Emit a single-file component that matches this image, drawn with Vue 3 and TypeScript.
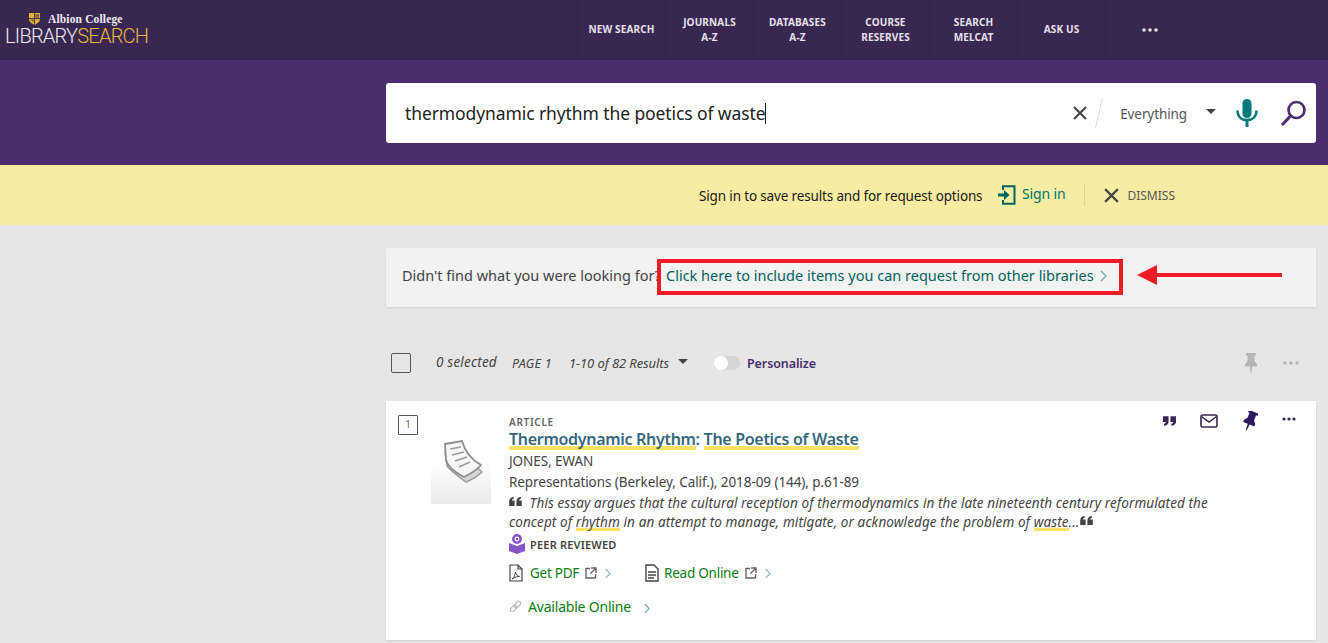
<script setup lang="ts">
interface NavItem {
  lines: string[]
}

const navItems: NavItem[] = [
  { lines: ['NEW SEARCH'] },
  { lines: ['JOURNALS', 'A-Z'] },
  { lines: ['DATABASES', 'A-Z'] },
  { lines: ['COURSE', 'RESERVES'] },
  { lines: ['SEARCH', 'MELCAT'] },
  { lines: ['ASK US'] },
]
</script>

<template>
  <div class="page">
    <header class="topbar">
      <div class="logo">
        <div class="logo__college">
          <svg class="logo__shield" viewBox="0 0 12 13" width="11" height="12">
            <path d="M0 0h12v6.500c0 3-3 5-6 6.500-3-1.500-6-3.500-6-6.500z" fill="#e2b43c" />
            <path d="M6 0v13M0 6h12" stroke="#3a2751" stroke-width="1" />
            <path d="M1 7h4v3zM7 1h4v4H7z" fill="#7d6430" />
          </svg>
          <span>Albion College</span>
        </div>
        <div class="logo__name">LIBRARY<span>SEARCH</span></div>
      </div>
      <nav class="topnav">
        <a v-for="item in navItems" :key="item.lines[0]" class="topnav__item">
          <span v-for="line in item.lines" :key="line">{{ line }}</span>
        </a>
        <a class="topnav__item topnav__more">
          <svg viewBox="0 0 16 4" width="16" height="4"><circle cx="2" cy="2" r="1.800" /><circle cx="8" cy="2" r="1.800" /><circle cx="14" cy="2" r="1.800" /></svg>
        </a>
      </nav>
    </header>

    <section class="searchband">
      <div class="searchbox">
        <span class="searchbox__query">thermodynamic rhythm the poetics of waste</span>
        <span class="searchbox__caret"></span>
        <svg class="searchbox__clear" viewBox="0 0 16 16" width="16" height="16">
          <path d="M2 2l12 12M14 2L2 14" stroke="#444" stroke-width="2" fill="none" />
        </svg>
        <svg class="searchbox__slash" viewBox="0 0 10 32" width="10" height="32">
          <path d="M8.500 1L1.500 31" stroke="#ddd" stroke-width="1" />
        </svg>
        <span class="searchbox__scope">Everything</span>
        <span class="caret-down searchbox__arrow"></span>
        <svg class="searchbox__mic" viewBox="0 0 22 28" width="22" height="28">
          <rect x="6.500" y="0" width="9" height="19" rx="4.500" fill="#047a7c" />
          <path d="M1.500 11.500c0 6 4 9.500 9.500 9.500s9.500-3.500 9.500-9.500" fill="none" stroke="#047a7c" stroke-width="2.600" />
          <path d="M11 21v7" stroke="#047a7c" stroke-width="3" />
        </svg>
        <svg class="searchbox__go" viewBox="0 0 26 26" width="26" height="26">
          <circle cx="15.500" cy="10" r="8" fill="none" stroke="#4b2e6e" stroke-width="2.600" />
          <path d="M9.500 16L2 24" stroke="#4b2e6e" stroke-width="3.200" stroke-linecap="round" />
        </svg>
      </div>
    </section>

    <section class="signin">
      <span class="signin__text">Sign in to save results and for request options</span>
      <a class="signin__link">
        <svg viewBox="0 0 18 20" width="18" height="20">
          <path d="M5 5V1.200h11.500v17.600H5V15" fill="none" stroke="#00645f" stroke-width="2" />
          <path d="M0 8.500h6V5l5.500 5L6 15v-3.500H0z" fill="#00645f" />
        </svg>
        <span class="signin__label">Sign in</span>
      </a>
      <span class="signin__divider"></span>
      <a class="signin__dismiss">
        <svg viewBox="0 0 16 16" width="17" height="17">
          <path d="M2 2l12 12M14 2L2 14" stroke="#444" stroke-width="2" fill="none" />
        </svg>
        <span>DISMISS</span>
      </a>
    </section>

    <main class="results">
      <div class="expand">
        <span class="expand__lead">Didn't find what you were looking for?</span>
        <a class="expand__link">Click here to include items you can request from other libraries</a>
        <svg class="expand__chevron" viewBox="0 0 7 12" width="7" height="12">
          <path d="M1 1l5 5-5 5" fill="none" stroke="#7fb0b2" stroke-width="1.500" />
        </svg>
        <span class="expand__mark"></span>
        <svg class="expand__arrow" viewBox="0 0 145 20" width="145" height="20">
          <path d="M0 10L20 0v8h125v4H20v8z" fill="#ed1c24" />
        </svg>
      </div>

      <div class="toolbar">
        <span class="checkbox"></span>
        <span class="toolbar__selected">0 selected</span>
        <span class="toolbar__page">PAGE 1</span>
        <span class="toolbar__count">1-10 of 82 Results</span>
        <span class="caret-down toolbar__arrow"></span>
        <span class="toggle"><span class="toggle__knob"></span></span>
        <span class="toolbar__personalize">Personalize</span>
        <svg class="toolbar__pin" viewBox="0 0 12 20" width="12" height="20">
          <path d="M1 0h10v2.500H9.500v5.500l2.500 3v2.500H7L6.500 20h-1L5 13.500H0V11l2.500-3V2.500H1z" fill="#b5b5b5" />
        </svg>
        <svg class="toolbar__more" viewBox="0 0 16 4" width="16" height="4">
          <circle cx="2" cy="2" r="1.800" /><circle cx="8" cy="2" r="1.800" /><circle cx="14" cy="2" r="1.800" />
        </svg>
      </div>

      <article class="record">
        <span class="record__index">1</span>
        <div class="record__thumb">
          <svg viewBox="0 0 44 46" width="44" height="46">
            <path d="M6 12l2 14c4 5 12 11 19 16 5-2 11-5 16-10l-3-3z" fill="#d5d5d5" stroke="#9c9c9c" stroke-width="1.500" />
            <path d="M6 4l17-3c3 11 10 19 19 24-4 5-11 9-17 12C15 32 9 27 7 20z" fill="#f7f7f7" stroke="#8e8e8e" stroke-width="1.800" />
            <path d="M11 9l11-2M13 15l12-3M16 21l12-4M20 27l11-5" stroke="#9a9a9a" stroke-width="1.600" />
          </svg>
        </div>
        <div class="record__body">
          <div class="record__type">ARTICLE</div>
          <h3 class="record__title"><mark>Thermodynamic Rhythm</mark>: <mark>The Poetics of Waste</mark></h3>
          <div class="record__author">JONES, EWAN</div>
          <div class="record__source">Representations (Berkeley, Calif.), 2018-09 (144), p.61-89</div>
          <p class="record__snippet">
            <svg class="quote" viewBox="0 0 14 10" width="13" height="9"><path d="M0 10V5c0-3 2-5 5-5v2C4 2 3 3 3 4h3v6zM8 10V5c0-3 2-5 5-5v2c-1 0-2 1-2 2h3v6z" fill="#444" /></svg>
            This essay argues that the cultural reception of thermodynamics in the late nineteenth century reformulated the concept of <u>rhythm</u> in an attempt to manage, mitigate, or acknowledge the problem of <u>waste</u>...<svg class="quote quote--end" viewBox="0 0 14 10" width="13" height="9"><path d="M0 10V5c0-3 2-5 5-5v2C4 2 3 3 3 4h3v6zM8 10V5c0-3 2-5 5-5v2c-1 0-2 1-2 2h3v6z" fill="#444" /></svg>
          </p>
          <div class="record__peer">
            <svg viewBox="0 0 16 20" width="16" height="20">
              <circle cx="8" cy="5" r="5" fill="#8656c9" />
              <circle cx="8" cy="5" r="2.400" fill="#fff" />
              <circle cx="8" cy="5" r="1.200" fill="#8656c9" />
              <path d="M0 9l8 3 8-3v8l-8 3-8-3z" fill="#8656c9" />
            </svg>
            <span>PEER REVIEWED</span>
          </div>
          <div class="record__links">
            <a class="access">
              <svg viewBox="0 0 14 18" width="14" height="18">
                <path d="M1 1h8l4 4v12H1z" fill="none" stroke="#444" stroke-width="1.200" />
                <path d="M9 1v4h4" fill="none" stroke="#444" stroke-width="1.200" />
                <path d="M3 15c2-1 3-4 3.500-7 .5 3 2 4 4 4.500-2 0-4 .5-7.500 2.500z" fill="none" stroke="#444" stroke-width="1" />
              </svg>
              <span class="access__label">Get PDF</span>
              <svg class="external" viewBox="0 0 12 12" width="12" height="12">
                <path d="M5 1.500H1v9.500h9.500V7M6 1h5v5M11 1L5.500 6.500" fill="none" stroke="#666" stroke-width="1.400" />
              </svg>
              <svg class="chevron" viewBox="0 0 7 12" width="6" height="11"><path d="M1 1l5 5-5 5" fill="none" stroke="#9cb8c4" stroke-width="1.500" /></svg>
            </a>
            <a class="access">
              <svg viewBox="0 0 14 18" width="14" height="18">
                <path d="M1 1h8l4 4v12H1z" fill="none" stroke="#444" stroke-width="1.400" />
                <path d="M3 8h8M3 11h8M3 14h6" stroke="#444" stroke-width="1.300" />
              </svg>
              <span class="access__label access__label--tight">Read Online</span>
              <svg class="external" viewBox="0 0 12 12" width="12" height="12">
                <path d="M5 1.500H1v9.500h9.500V7M6 1h5v5M11 1L5.500 6.500" fill="none" stroke="#666" stroke-width="1.400" />
              </svg>
              <svg class="chevron" viewBox="0 0 7 12" width="6" height="11"><path d="M1 1l5 5-5 5" fill="none" stroke="#9cb8c4" stroke-width="1.500" /></svg>
            </a>
          </div>
          <a class="record__available">
            <svg viewBox="0 0 13 13" width="13" height="13">
              <g transform="rotate(-45 6.500 6.500)" fill="none" stroke="#bbb" stroke-width="1.200">
                <rect x="0" y="4.500" width="7.500" height="4" rx="2" />
                <rect x="5.500" y="4.500" width="7.500" height="4" rx="2" />
              </g>
            </svg>
            <span>Available Online</span>
            <svg class="chevron chevron--low" viewBox="0 0 7 12" width="6" height="11"><path d="M1 1l5 5-5 5" fill="none" stroke="#7fb0b2" stroke-width="1.500" /></svg>
          </a>
        </div>
        <div class="record__actions">
          <svg viewBox="0 0 14 10" width="13" height="10"><path d="M0 0h6v6c0 2-2 4-5 4V8c1 0 2-1 2-2H0zM8 0h6v6c0 2-2 4-5 4V8c1 0 2-1 2-2H8z" fill="#3a2751" /></svg>
          <svg viewBox="0 0 18 14" width="18" height="14">
            <rect x="1" y="1" width="16" height="12" rx="1.500" fill="none" stroke="#3a2751" stroke-width="1.600" />
            <path d="M1.500 2.500L9 8l7.500-5.500" fill="none" stroke="#3a2751" stroke-width="1.500" />
          </svg>
          <svg viewBox="-2 0 16 20" width="16" height="20">
            <path transform="rotate(22 6 10)" d="M1 0h10v2.500H9.500v5.500l2.500 3v2.500H7L6.500 20h-1L5 13.500H0V11l2.500-3V2.500H1z" fill="#2d1a5e" />
          </svg>
          <svg class="record__dots" viewBox="0 0 14 4" width="14" height="4"><circle cx="2" cy="2" r="1.600" fill="#3a2751" /><circle cx="7" cy="2" r="1.600" fill="#3a2751" /><circle cx="12" cy="2" r="1.600" fill="#3a2751" /></svg>
        </div>
      </article>
    </main>
  </div>
</template>

<style>
html,
body {
  margin: 0;
  background: #e6e6e6;
  overflow: hidden;
}
</style>

<style scoped>
.page {
  width: 1328px;
  height: 643px;
  overflow: hidden;
  font-family: "Noto Sans", "Open Sans", sans-serif;
  color: #3a3a3a;
}

.topbar {
  height: 60px;
  background: #3a2751;
  display: flex;
  justify-content: space-between;
}

.logo {
  padding: 12px 0 0 5px;
  color: #eeeaf2;
}

.logo__college {
  display: flex;
  align-items: center;
  gap: 8px;
  padding-left: 24px;
  font: bold 11.500px/14px "Liberation Serif", serif;
  letter-spacing: 0.15px;
}

.logo__name {
  font: 300 20px/20px Roboto, sans-serif;
  letter-spacing: -0.75px;
  margin-top: 0;
}

.logo__name span {
  color: #e9b93a;
}

.topnav {
  display: flex;
  margin-right: 135px;
}

.topnav__item {
  width: 88px;
  box-sizing: border-box;
  padding-bottom: 1px;
  border-left: 1px solid #352247;
  display: flex;
  flex-direction: column;
  align-items: center;
  justify-content: center;
  color: #e6e1ec;
  font-size: 10px;
  font-weight: 700;
  line-height: 14.500px;
  letter-spacing: 0.15px;
}

.topnav__more svg {
  fill: #e6e1ec;
}

.searchband {
  height: 105px;
  background: #4b2e6e;
  box-sizing: border-box;
  padding: 23px 12px 0 386px;
}

.searchbox {
  height: 60px;
  background: #fff;
  border-radius: 3px;
  display: flex;
  align-items: center;
  padding: 0 9px 0 19px;
}

.searchbox__query {
  font-size: 17.500px;
  letter-spacing: -0.1px;
  color: #222;
}

.searchbox__caret {
  width: 1px;
  height: 21px;
  background: #222;
}

.searchbox__clear {
  margin-left: auto;
}

.searchbox__slash {
  margin-left: 6px;
}

.searchbox__scope {
  margin-left: 16px;
  padding-top: 1px;
  font-size: 13.500px;
  color: #555;
  letter-spacing: -0.1px;
}

.searchbox__arrow {
  margin-left: 19px;
  margin-bottom: 3px;
}

.searchbox__mic {
  margin-left: 20px;
}

.searchbox__go {
  margin-left: 23px;
}

.caret-down {
  width: 0;
  height: 0;
  border-left: 5px solid transparent;
  border-right: 5px solid transparent;
  border-top: 5px solid #444;
}

.signin {
  height: 60px;
  background: #f7eda2;
  display: flex;
  align-items: center;
  padding-left: 699px;
  box-sizing: border-box;
}

.signin__text {
  width: 299px;
  padding-top: 2px;
  font-size: 13.500px;
  letter-spacing: -0.15px;
  color: #1a1a1a;
  white-space: nowrap;
}

.signin__link {
  display: flex;
  align-items: center;
  gap: 6px;
  color: #00726d;
  font-size: 14px;
  letter-spacing: -0.15px;
}

.signin__label {
  margin-top: -3px;
}

.signin__divider {
  width: 1px;
  height: 22px;
  background: #dcd394;
  margin: 0 18px 0 19px;
}

.signin__dismiss {
  display: flex;
  align-items: center;
  gap: 7px;
  color: #555;
  font-size: 12px;
  letter-spacing: 0;
}

.results {
  padding: 23px 12px 0 386px;
}

.expand {
  height: 59px;
  box-sizing: border-box;
  padding: 0 0 5px 16px;
  background: #f2f2f2;
  box-shadow: 0 1px 2px rgba(0, 0, 0, 0.1);
  display: flex;
  align-items: center;
  position: relative;
  font-size: 14.500px;
  white-space: nowrap;
}

.expand__lead {
  color: #444;
  width: 264px;
}

.expand__link {
  color: #00645f;
}

.expand__chevron {
  margin-left: 6px;
  margin-top: 2px;
}

.expand__mark {
  position: absolute;
  left: 271px;
  top: 11px;
  width: 466px;
  height: 36px;
  box-sizing: border-box;
  border: 4px solid #ed1c24;
}

.expand__arrow {
  position: absolute;
  left: 751px;
  top: 17px;
}

.toolbar {
  height: 30px;
  margin-top: 41px;
  display: flex;
  align-items: center;
  padding-left: 5px;
  padding-right: 17px;
  font-size: 12.500px;
  letter-spacing: -0.1px;
  color: #444;
}

.checkbox {
  width: 18px;
  height: 18px;
  border: 1px solid #555;
  border-radius: 2px;
  flex: none;
}

.toolbar__selected {
  font-style: italic;
  font-size: 13.500px;
  letter-spacing: 0.2px;
  margin-left: 25px;
  margin-top: -2px;
}

.toolbar__page {
  margin-left: 15px;
  font-style: italic;
  font-size: 12.500px;
  letter-spacing: 0.3px;
}

.toolbar__count {
  margin-left: 17px;
  font-style: italic;
  font-size: 13px;
}

.toolbar__arrow {
  margin-left: 9px;
  margin-bottom: 3px;
}

.toggle {
  width: 26px;
  height: 14px;
  border-radius: 7px;
  background: #d5d5d5;
  margin-left: 26px;
  position: relative;
}

.toggle__knob {
  position: absolute;
  left: 0;
  top: 0;
  width: 14px;
  height: 14px;
  border-radius: 50%;
  background: #fff;
}

.toolbar__personalize {
  margin-left: 7px;
  color: #4b2e6e;
  font-weight: 600;
  font-size: 12.500px;
}

.toolbar__pin {
  margin-left: auto;
}

.toolbar__more {
  margin-left: 26px;
  fill: #b5b5b5;
}

.record {
  margin-top: 23px;
  height: 239px;
  background: #fff;
  box-shadow: 0 1px 2px rgba(0, 0, 0, 0.1);
  display: flex;
  position: relative;
}

.record__index {
  position: absolute;
  left: 12px;
  top: 14px;
  width: 18px;
  height: 18px;
  border: 1px solid #555;
  border-radius: 1px;
  text-align: center;
  font-size: 10px;
  line-height: 17px;
  color: #666;
}

.record__thumb {
  position: absolute;
  left: 45px;
  top: 39px;
  width: 60px;
  height: 64px;
  display: flex;
  justify-content: center;
  background: linear-gradient(#fff 35%, #e9e9e9);
}

.record__body {
  margin-left: 123px;
  padding-top: 15px;
  width: 720px;
}

.record__type {
  font-size: 10px;
  line-height: 12px;
  font-weight: 600;
  letter-spacing: 0.7px;
  color: #666;
}

.record__title {
  margin: 1px 0 0;
  font-size: 16px;
  line-height: 20px;
  font-weight: 600;
  letter-spacing: -0.3px;
  color: #35687f;
}

.record__title mark {
  color: inherit;
  background: linear-gradient(transparent 80%, #ffe264 80%);
}

.record__author,
.record__source {
  font-size: 13.500px;
  line-height: 21px;
  letter-spacing: -0.07px;
  color: #444;
}

.record__author {
  margin-top: 2px;
}

.record__snippet {
  margin: 1px 0 0;
  font-size: 13.500px;
  line-height: 19px;
  font-style: italic;
  letter-spacing: 0.1px;
  color: #444;
}

.record__snippet u {
  text-decoration: none;
  background: linear-gradient(transparent 82%, #ffe264 82%);
}

.quote {
  margin-right: 4px;
  vertical-align: 2px;
}

.quote--end {
  margin: 0 0 0 1px;
}

.record__peer {
  display: flex;
  align-items: center;
  gap: 5px;
  margin-top: 2px;
  font-size: 11px;
  font-weight: 600;
  letter-spacing: 0.2px;
  color: #444;
}

.record__links {
  display: flex;
  gap: 34px;
  margin-top: 10px;
}

.access {
  display: flex;
  align-items: center;
  gap: 6px;
  color: #0a7d12;
  font-size: 13.500px;
  letter-spacing: -0.25px;
}

.access__label {
  margin-left: 1px;
}

.access__label--tight {
  margin-left: -1px;
}

.chevron {
  margin-left: 2px;
}

.chevron--low {
  margin-left: 7px;
  margin-top: 3px;
}

.record__available {
  display: flex;
  align-items: center;
  gap: 6px;
  margin-top: 15px;
  color: #0a7d12;
  font-size: 14px;
  letter-spacing: -0.2px;
}

.record__actions {
  position: absolute;
  right: 20px;
  top: 9px;
  width: 133px;
  height: 22px;
  display: flex;
  align-items: center;
  justify-content: space-between;
}

.record__dots {
  margin-bottom: 4px;
}
</style>
